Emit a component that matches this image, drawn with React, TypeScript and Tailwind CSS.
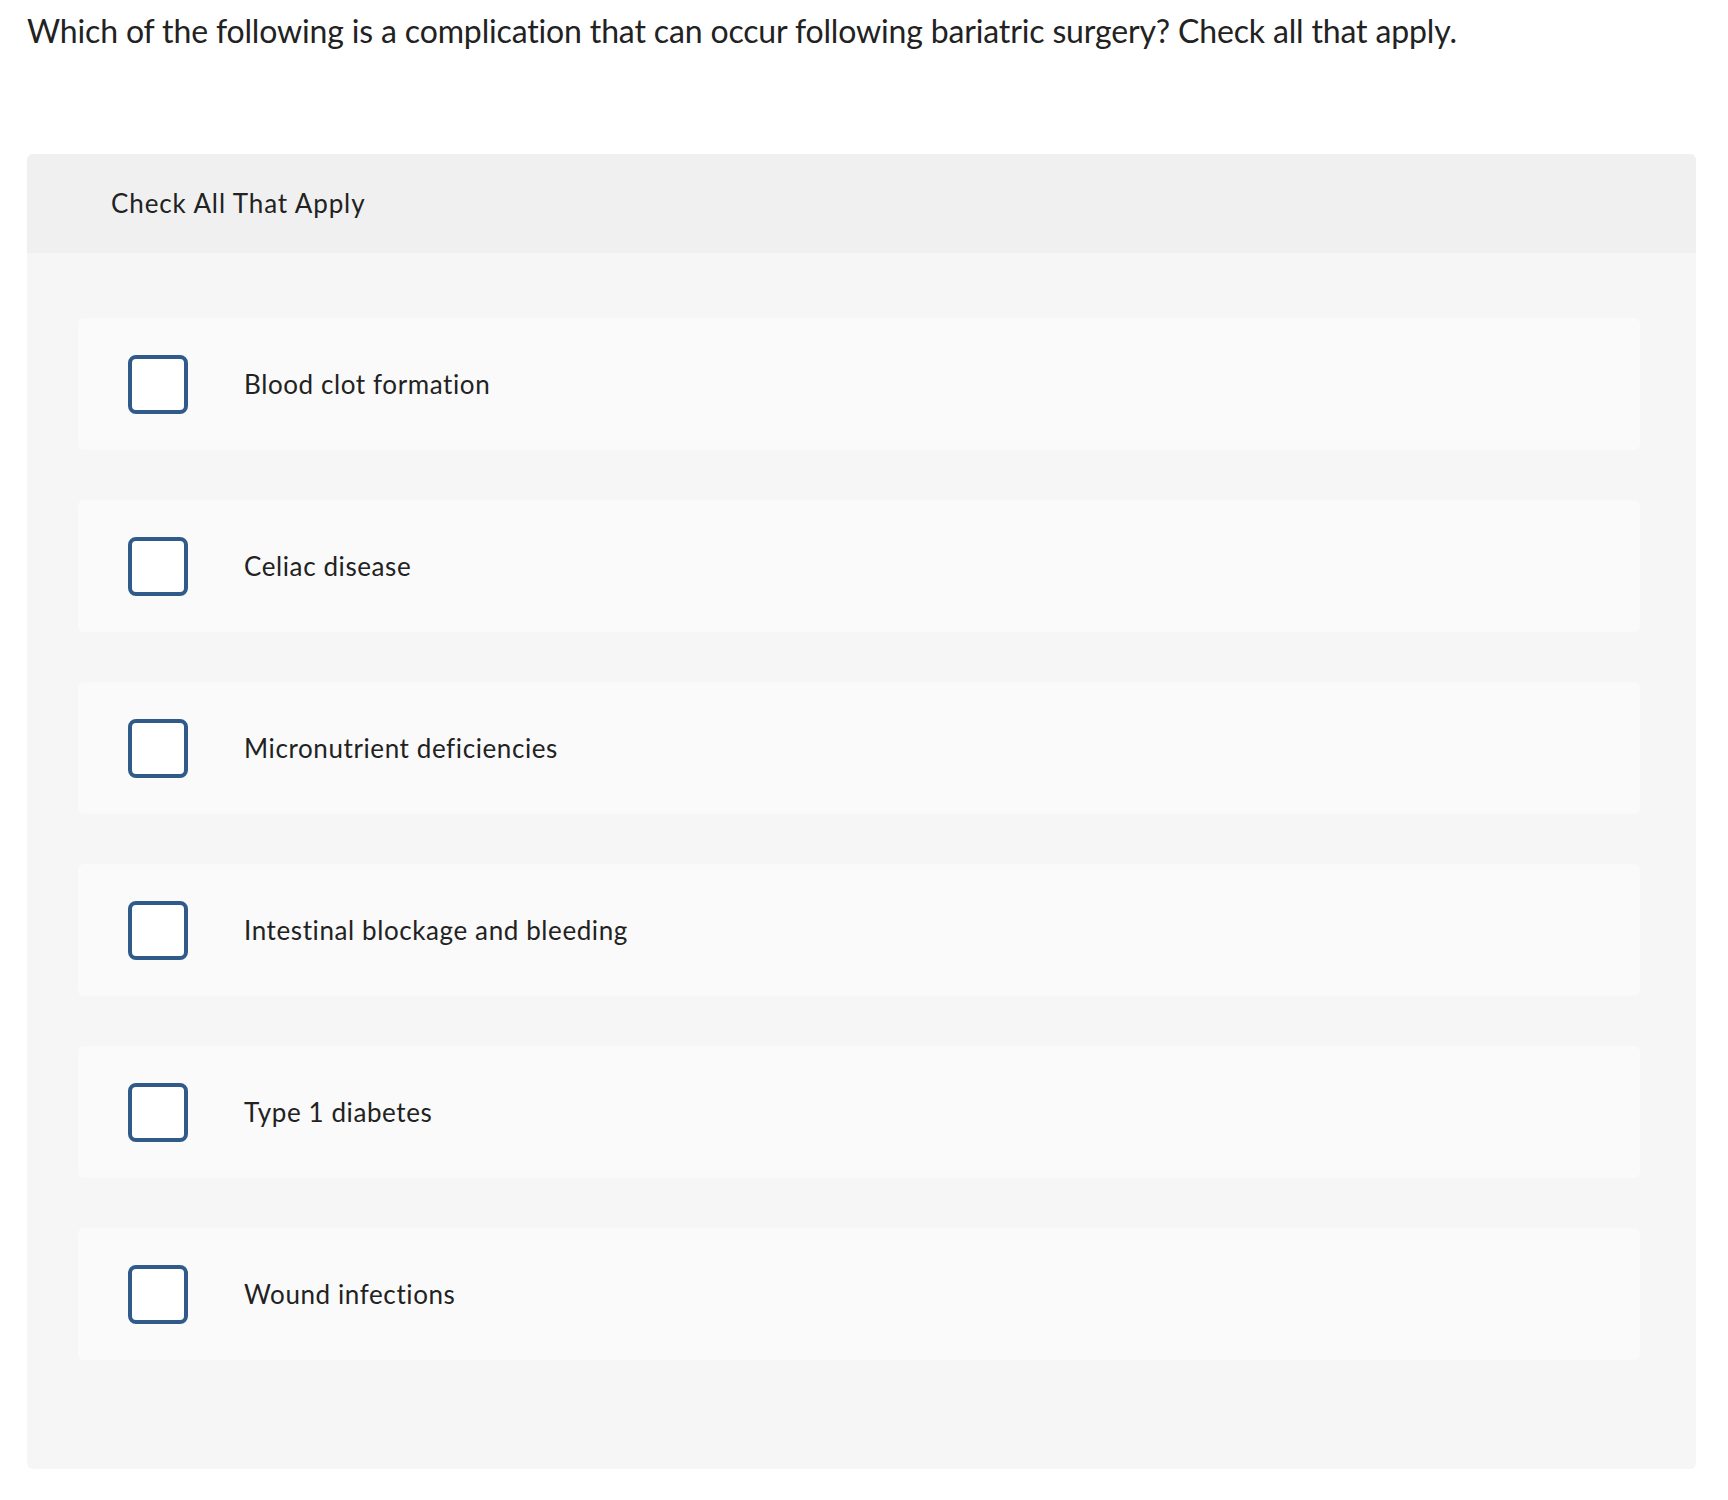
import React from "react";

const options = [
  "Blood clot formation",
  "Celiac disease",
  "Micronutrient deficiencies",
  "Intestinal blockage and bleeding",
  "Type 1 diabetes",
  "Wound infections",
];

export default function App() {
  return (
    <div className="min-h-[1500px] bg-white text-[#222222]" style={{ fontFamily: "Lato, 'Noto Sans', sans-serif" }}>
      <div className="pl-[27px] pr-[32px] pt-[9px]">
        <p className="text-[32px] leading-[44px] tracking-[-0.15px]">
          Which of the following is a complication that can occur following bariatric surgery? Check all that apply.
        </p>
        <div className="mt-[101px] w-[1669px] overflow-hidden rounded-[6px] bg-[#f6f6f6]">
          <div className="flex h-[99px] items-center bg-[#f0f0f0] pl-[84px]">
            <span className="text-[26px] tracking-[0.9px]">Check All That Apply</span>
          </div>
          <div className="flex flex-col gap-[50px] pb-[109px] pl-[51px] pr-[56px] pt-[65px]">
            {options.map((o) => (
              <label key={o} className="flex h-[132px] cursor-pointer items-center rounded-[6px] bg-[#fafafa] pl-[50px]">
                <span className="h-[59px] w-[60px] shrink-0 rounded-[8px] border-[4px] border-[#2f5a8a] bg-white" />
                <span className="ml-[56px] text-[26px] tracking-[0.6px]">{o}</span>
              </label>
            ))}
          </div>
        </div>
      </div>
    </div>
  );
}
